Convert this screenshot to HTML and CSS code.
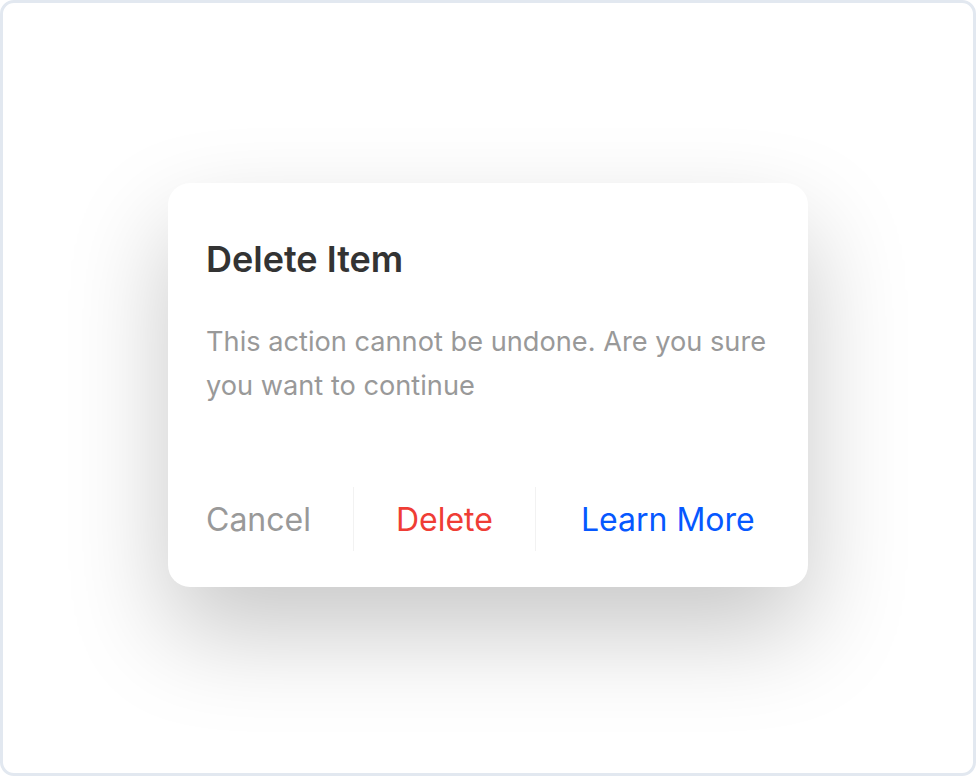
FILE: index.html
```html
<!DOCTYPE html>
<html lang="en">
<head>
<meta charset="utf-8">
<title>Delete Item</title>
<link rel="stylesheet" href="styles.css">
</head>
<body>
<div class="frame">
  <div class="dialog" role="dialog" aria-labelledby="dlg-title">
    <h2 id="dlg-title" class="dialog-title">Delete Item</h2>
    <p class="dialog-text">This action cannot be undone. Are you sure you want to continue</p>
    <div class="dialog-actions">
      <button class="action action-cancel">Cancel</button>
      <button class="action action-delete">Delete</button>
      <button class="action action-more">Learn More</button>
    </div>
  </div>
</div>
</body>
</html>
```

FILE: styles.css
```css
html, body {
  margin: 0;
  padding: 0;
  height: 100%;
}
body {
  font-family: Inter, "Noto Sans", sans-serif;
  background: #ffffff;
}
.frame {
  box-sizing: border-box;
  width: 976px;
  height: 776px;
  border: 3px solid #e2e8f0;
  border-radius: 14px;
  background: #ffffff;
  display: flex;
  justify-content: center;
  padding-top: 180px;
}
.dialog {
  box-sizing: border-box;
  width: 640px;
  height: 404px;
  background: #ffffff;
  border-radius: 22px;
  padding: 54px 38px 36px 38px;
  box-shadow: 0 45px 100px rgba(0, 0, 0, 0.22);
  display: flex;
  flex-direction: column;
}
.dialog-title {
  margin: 0;
  font-size: 36px;
  font-weight: 600;
  color: #333333;
  line-height: 44px;
}
.dialog-text {
  margin: 39px 0 0 0;
  font-size: 27.2px;
  line-height: 44px;
  color: #999999;
  font-weight: 400;
}
.dialog-actions {
  margin-top: auto;
  display: flex;
  align-items: stretch;
  height: 64px;
}
.action {
  font-family: inherit;
  background: none;
  border: none;
  border-left: 1px solid #f2f2f2;
  padding: 2px 42px 0 42px;
  font-size: 32px;
  font-weight: 400;
  cursor: pointer;
  line-height: 62px;
  white-space: nowrap;
  flex-shrink: 0;
}
.action-cancel {
  border-left: none;
  padding-left: 0;
  color: #999999;
}
.action-delete {
  color: #ef3d35;
}
.action-more {
  color: #0658ff;
  padding-left: 45px;
  padding-right: 0;
}
```
